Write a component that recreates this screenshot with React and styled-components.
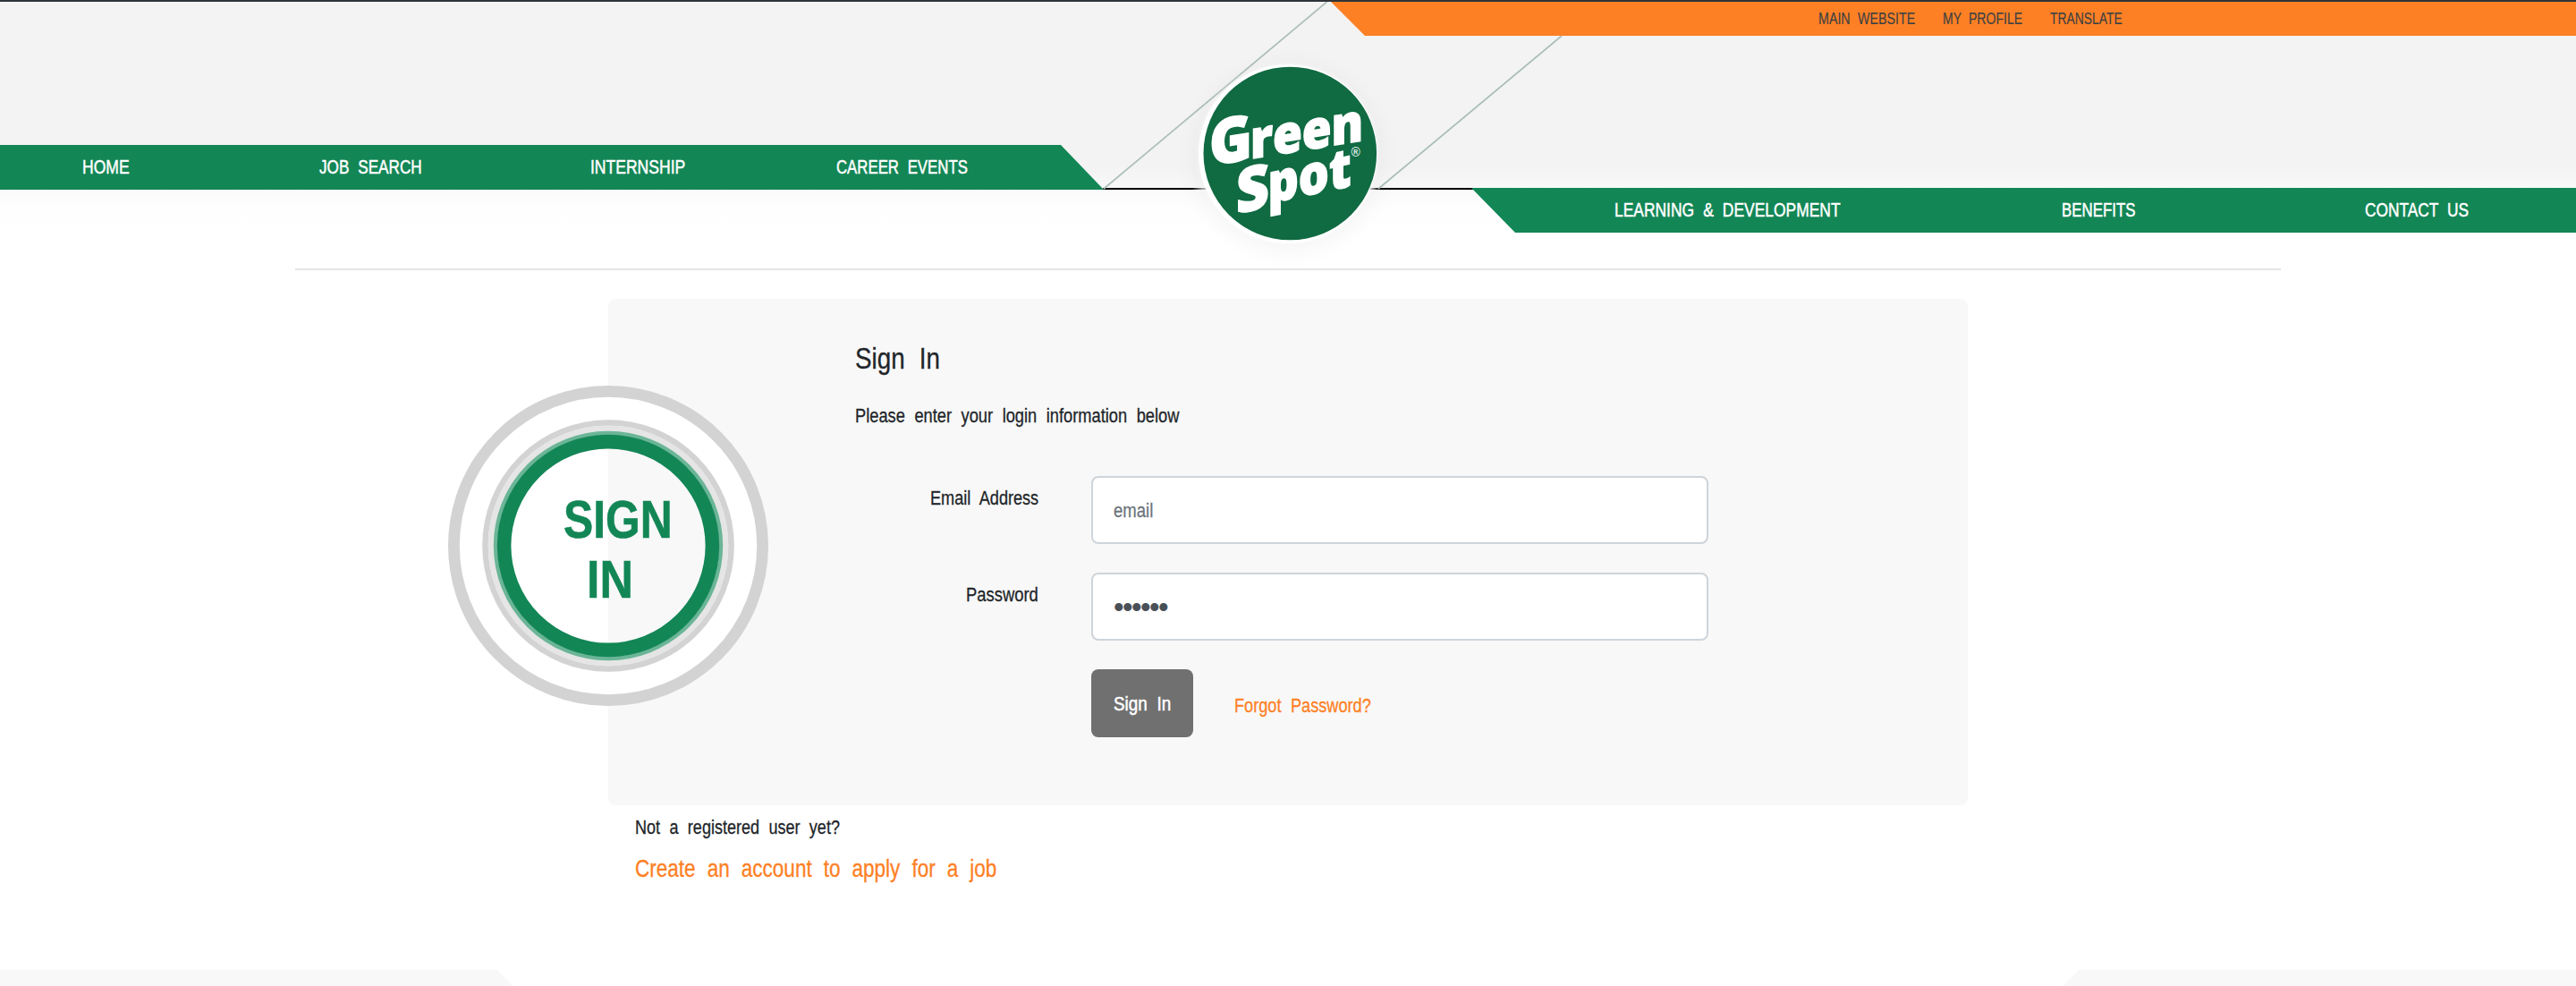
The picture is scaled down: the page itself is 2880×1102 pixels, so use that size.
import React, { useLayoutEffect, useRef, useState } from 'react';
import styled, { createGlobalStyle } from 'styled-components';

const GREEN = '#138656';
const ORANGE = '#fe8024';
const INK = '#212529';

const GlobalStyle = createGlobalStyle`
  *, *::before, *::after { box-sizing: border-box; }
  body {
    margin: 0;
    background: #fff;
    color: ${INK};
    font-family: "Liberation Sans", Arial, sans-serif;
    overflow: hidden;
  }
`;

/* Condensed text: normal glyphs narrowed to a given line width */
const TextBox = styled.span`
  display: inline-block;
  flex: none;
  width: ${(p) => p.$width}px;
  height: ${(p) => p.$line}px;
  line-height: ${(p) => p.$line}px;
  font-size: ${(p) => p.$size}px;
  font-weight: ${(p) => (p.$bold ? 700 : 400)};
  text-align: left;
  vertical-align: top;
`;

const Glyphs = styled.span`
  display: inline-block;
  white-space: nowrap;
  word-spacing: 0.3em;
  transform-origin: 0 50%;
  -webkit-text-stroke: ${(p) => p.$stroke}px currentColor;
`;

function Condensed({ children, width, size = 22.5, line = 32, bold, stroke = 0.3 }) {
  const ref = useRef(null);
  const [scale, setScale] = useState(0.8);
  useLayoutEffect(() => {
    const measure = () => {
      if (ref.current) setScale(width / ref.current.offsetWidth);
    };
    measure();
    document.fonts.ready.then(measure);
  }, [width]);
  return (
    <TextBox $width={width} $size={size} $line={line} $bold={bold}>
      <Glyphs ref={ref} $stroke={stroke} style={{ transform: `scaleX(${scale})` }}>
        {children}
      </Glyphs>
    </TextBox>
  );
}

const Page = styled.div`
  display: flex;
  flex-direction: column;
  height: 1102px;
  overflow: hidden;
`;

const Header = styled.header`
  position: relative;
  display: flex;
  flex-direction: column;
  height: 260px;
  border-top: 2px solid #2f3337;
  background: linear-gradient(
    #f3f3f3 0, #f3f3f3 184px, #f8f8f8 208px,
    #fafafa 210px, #fefefe 232px, #fff 258px
  );
`;

const Decor = styled.svg`
  position: absolute;
  left: 1200px;
  top: 0;
`;

const UtilityBar = styled.div`
  position: relative;
  align-self: flex-end;
  display: flex;
  align-items: center;
  gap: 31px;
  width: 1392px;
  height: 38px;
  padding: 0 0 1px 545px;
  background: ${ORANGE};
  color: #3c4043;
  clip-path: polygon(0 0, 100% 0, 100% 100%, 38px 100%);
`;

const NavRow = styled.div`
  position: relative;
  display: flex;
  justify-content: space-between;
  align-items: flex-start;
  margin-top: 122px;
`;

const Nav = styled.nav`
  display: flex;
  align-items: center;
  height: 50px;
  background: ${GREEN};
  color: #fff;
`;

const LeftNav = styled(Nav)`
  width: 1234px;
  padding-left: 92px;
  clip-path: polygon(0 0, 1186px 0, 100% 100%, 0 100%);
`;

const RightNav = styled(Nav)`
  width: 1235px;
  margin-top: 48px;
  padding-left: 160px;
  clip-path: polygon(0 0, 100% 0, 100% 100%, 49px 100%);
`;

const Slot = styled.a`
  flex: none;
  display: flex;
  width: ${(p) => p.$w}px;
`;

const Logo = styled.a`
  position: absolute;
  left: 1340px;
  top: 70px;
  width: 200px;
  height: 200px;
  border-radius: 50%;
  background: #fff;
  box-shadow: 0 0 7px rgba(255, 255, 255, 0.6), 0 4px 30px rgba(0, 0, 0, 0.06);
`;

const Divider = styled.hr`
  width: 2220px;
  height: 2px;
  margin: 40px auto 32px;
  border: 0;
  background: #e5e5e5;
`;

const Content = styled.main`
  width: 1520px;
  margin: 0 auto;
  height: 750px;
`;

const Card = styled.section`
  position: relative;
  height: 566px;
  padding: 47px 0 0 275.5px;
  border-radius: 8px;
  background: #f8f8f8;
`;

const Badge = styled.div`
  position: absolute;
  left: -179px;
  top: 97px;
  width: 358px;
  height: 358px;
`;

const BadgeRings = styled.svg`
  position: absolute;
  inset: 0;
`;

const BadgeLabel = styled.div`
  position: relative;
  display: flex;
  flex-direction: column;
  padding: 116px 0 0 128.5px;
  color: ${GREEN};
`;

const BadgeWord = styled.div`
  height: 67px;
  padding-left: ${(p) => p.$indent || 0}px;
`;

const Title = styled.h1`
  margin: 0;
  height: 40px;
`;

const Intro = styled.p`
  margin: 28px 0 51px;
  height: 32px;
`;

const Form = styled.form`
  display: flex;
  flex-direction: column;
  gap: 32px;
`;

const FormRow = styled.div`
  display: grid;
  grid-template-columns: 205.5px 690px;
  column-gap: 59px;
  height: 76px;
`;

const Label = styled.label`
  padding-top: 9px;
  text-align: right;
`;

const Field = styled.div`
  display: flex;
  align-items: center;
  padding: 1px 23px 0;
  border: 2px solid #ced4da;
  border-radius: 8px;
  background: #fff;
  color: ${(p) => (p.$filled ? '#495057' : '#6c757d')};
`;

const Dots = styled.span`
  font-size: 33px;
  line-height: 40px;
  letter-spacing: -1.55px;
`;

const Actions = styled.div`
  display: flex;
  align-items: center;
  gap: 46px;
  grid-column: 2;
`;

const Submit = styled.button`
  display: flex;
  align-items: center;
  justify-content: center;
  width: 114px;
  height: 76px;
  padding: 1px 0 0;
  border: 0;
  border-radius: 8px;
  background: #707070;
  color: #fff;
  font-family: inherit;
`;

const OrangeLink = styled.a`
  display: block;
  padding-top: ${(p) => p.$drop || 0}px;
  color: ${ORANGE};
`;

const Register = styled.div`
  display: flex;
  flex-direction: column;
  gap: 10px;
  padding: 9px 0 0 29.5px;
`;

const Footer = styled.footer`
  display: flex;
  justify-content: space-between;
  height: 18px;
`;

const FooterWing = styled.div`
  width: 574px;
  background: #f8f8f8;
  clip-path: ${(p) =>
    p.$right
      ? 'polygon(18px 0, 100% 0, 100% 100%, 0 100%)'
      : 'polygon(0 0, 556px 0, 100% 100%, 0 100%)'};
`;

const LogoWord = styled.text`
  fill: #fff;
  stroke: #fff;
  stroke-width: 1.6px;
  font-family: "Open Sans", sans-serif;
  font-weight: 800;
  font-size: ${(p) => p.$size}px;
`;

const Registered = styled.text`
  fill: #dbe9e2;
  font-family: "Liberation Sans", sans-serif;
  font-weight: 700;
  font-size: 14px;
`;

const leftLinks = [
  { label: 'HOME', width: 53, slot: 265 },
  { label: 'JOB SEARCH', width: 115, slot: 302.5 },
  { label: 'INTERNSHIP', width: 106, slot: 275.5 },
  { label: 'CAREER EVENTS', width: 147, slot: 150 },
];

const rightLinks = [
  { label: 'LEARNING & DEVELOPMENT', width: 252.5, slot: 500 },
  { label: 'BENEFITS', width: 82.5, slot: 339 },
  { label: 'CONTACT US', width: 116, slot: 120 },
];

function GreenSpotLogo() {
  return (
    <Logo href="#">
      <svg width="200" height="200" viewBox="0 0 200 200">
        <circle cx="102.3" cy="99.5" r="96.8" fill="#106a42" />
        <g transform="translate(12 113.2) skewY(-9.3)">
          <LogoWord $size={70} x="0" y="0" textLength="48" lengthAdjust="spacingAndGlyphs">G</LogoWord>
        </g>
        <g transform="translate(58 105.6) skewY(-9.3)">
          <LogoWord $size={59} x="0" y="0" textLength="126" lengthAdjust="spacingAndGlyphs">reen</LogoWord>
        </g>
        <g transform="translate(42 167) skewY(-12)">
          <LogoWord $size={69} x="0" y="0" textLength="37" lengthAdjust="spacingAndGlyphs">S</LogoWord>
        </g>
        <g transform="translate(77.5 155.6) skewY(-12)">
          <LogoWord $size={61} x="0" y="0" textLength="93" lengthAdjust="spacingAndGlyphs">pot</LogoWord>
        </g>
        <Registered x="170.5" y="103">®</Registered>
      </svg>
    </Logo>
  );
}

export default function App() {
  return (
    <Page>
      <GlobalStyle />
      <Header>
        <Decor width="560" height="212" viewBox="0 2 560 212">
          <defs>
            <linearGradient id="rule" gradientUnits="userSpaceOnUse" x1="33" y1="0" x2="445" y2="0">
              <stop offset="0" stopColor="#000" />
              <stop offset="0.24" stopColor="#000" />
              <stop offset="0.27" stopColor="#999" />
              <stop offset="0.73" stopColor="#999" />
              <stop offset="0.75" stopColor="#000" />
              <stop offset="1" stopColor="#000" />
            </linearGradient>
          </defs>
          <rect x="33" y="210" width="414" height="2" fill="url(#rule)" />
          <path d="M34 211 L283.5 2 M341 211 L546 40" stroke="#adbfb9" strokeWidth="1.7" fill="none" />
        </Decor>
        <UtilityBar>
          <Condensed size={18.5} stroke={0.15} width={108}>MAIN WEBSITE</Condensed>
          <Condensed size={18.5} stroke={0.15} width={89}>MY PROFILE</Condensed>
          <Condensed size={18.5} stroke={0.15} width={81}>TRANSLATE</Condensed>
        </UtilityBar>
        <NavRow>
          <LeftNav>
            {leftLinks.map((l) => (
              <Slot key={l.label} $w={l.slot}>
                <Condensed width={l.width} stroke={0.5}>{l.label}</Condensed>
              </Slot>
            ))}
          </LeftNav>
          <RightNav>
            {rightLinks.map((l) => (
              <Slot key={l.label} $w={l.slot}>
                <Condensed width={l.width} stroke={0.5}>{l.label}</Condensed>
              </Slot>
            ))}
          </RightNav>
        </NavRow>
        <GreenSpotLogo />
      </Header>

      <Divider />

      <Content>
        <Card>
          <Badge>
            <BadgeRings width="358" height="358" viewBox="0 0 358 358">
              <g fill="none">
                <circle cx="179" cy="179" r="154" stroke="#fff" strokeWidth="26" />
                <circle cx="179" cy="179" r="172.6" stroke="#d3d3d3" strokeWidth="12.8" />
                <circle cx="179" cy="179" r="137.5" stroke="#d3d3d3" strokeWidth="6.6" />
                <circle cx="179" cy="179" r="131" stroke="#e5e5e5" strokeWidth="6.8" />
                <circle cx="179" cy="179" r="126" stroke="#6bb597" strokeWidth="4.4" />
                <circle cx="179" cy="179" r="116.4" stroke={GREEN} strokeWidth="15.6" />
              </g>
            </BadgeRings>
            <BadgeLabel>
              <BadgeWord>
                <Condensed bold size={60} line={67} width={122} stroke={0.6}>SIGN</Condensed>
              </BadgeWord>
              <BadgeWord $indent={26.5}>
                <Condensed bold size={60} line={67} width={52} stroke={0.6}>IN</Condensed>
              </BadgeWord>
            </BadgeLabel>
          </Badge>

          <Title>
            <Condensed size={32.5} line={40} width={95}>Sign In</Condensed>
          </Title>
          <Intro>
            <Condensed width={362}>Please enter your login information below</Condensed>
          </Intro>

          <Form>
            <FormRow>
              <Label><Condensed width={121.5}>Email Address</Condensed></Label>
              <Field><Condensed width={44.5}>email</Condensed></Field>
            </FormRow>
            <FormRow>
              <Label><Condensed width={81}>Password</Condensed></Label>
              <Field $filled><Dots>••••••</Dots></Field>
            </FormRow>
            <FormRow>
              <Actions>
                <Submit type="button">
                  <Condensed width={64.5} stroke={0.5}>Sign In</Condensed>
                </Submit>
                <OrangeLink href="#" $drop={5}>
                  <Condensed width={152.5}>Forgot Password?</Condensed>
                </OrangeLink>
              </Actions>
            </FormRow>
          </Form>
        </Card>
        <Register>
          <Condensed width={229}>Not a registered user yet?</Condensed>
          <OrangeLink href="#">
            <Condensed size={27.5} line={40} width={404}>Create an account to apply for a job</Condensed>
          </OrangeLink>
        </Register>
      </Content>

      <Footer>
        <FooterWing />
        <FooterWing $right />
      </Footer>
    </Page>
  );
}
